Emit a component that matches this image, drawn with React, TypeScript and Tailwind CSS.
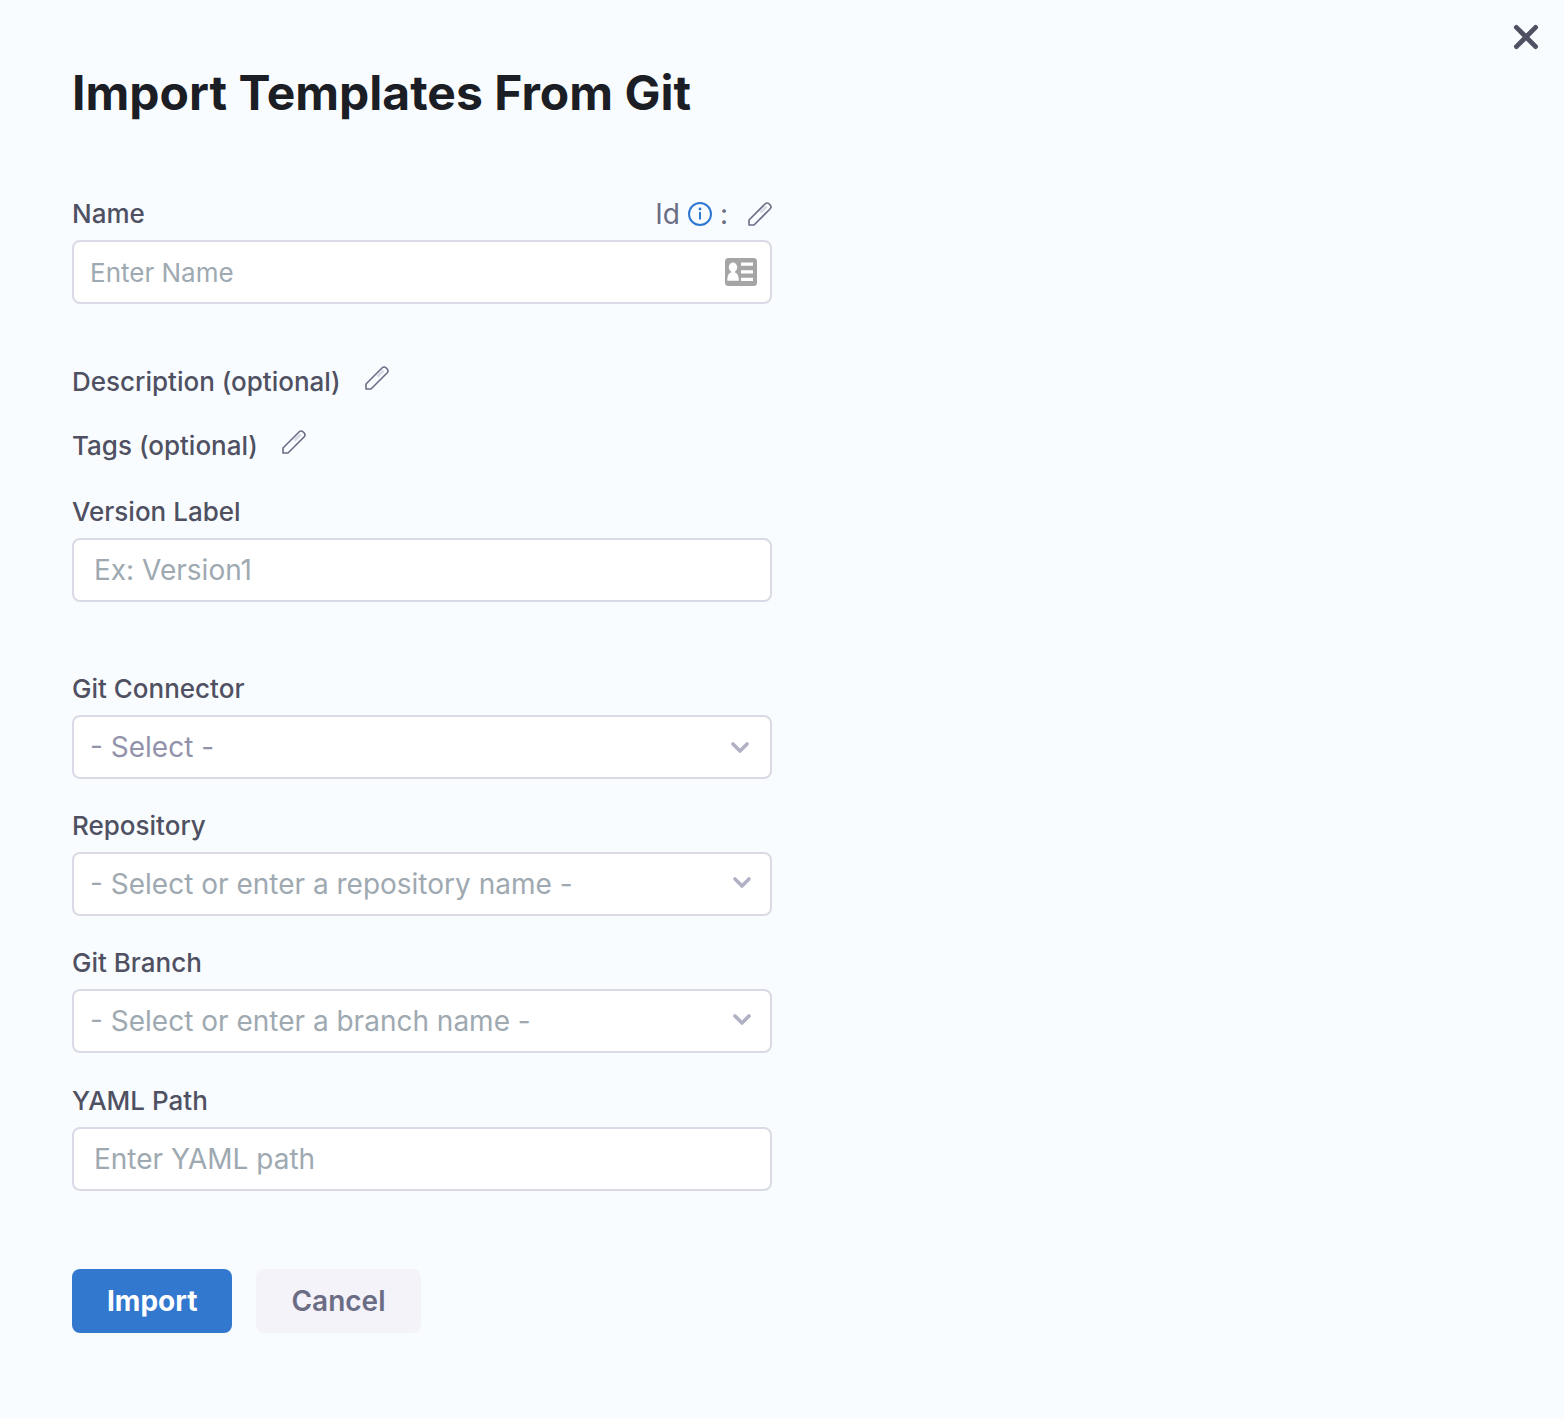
import React from 'react'

function EditButton({ name }: { name: string }) {
  return (
    <button type="button" aria-label={name} className="block">
      <svg width="24" height="24" viewBox="0 0 24 24" fill="none" strokeLinejoin="round" aria-hidden="true">
        <path d="M12.500 10.500l6-6" stroke="#d9dae5" strokeWidth="2.6" />
        <path
          d="M1 23v-5L17 2a3 3 0 0 1 4.200 0l.8.8a3 3 0 0 1 0 4.200L6 23z"
          stroke="#6b6d85"
          strokeWidth="1.6"
        />
      </svg>
    </button>
  )
}

function InfoIcon() {
  return (
    <svg width="24" height="24" viewBox="0 0 24 24" fill="none" stroke="#2f78d2" strokeWidth="2" aria-hidden="true">
      <circle cx="12" cy="12" r="11" />
      <path d="M12 10v7.600" />
      <circle cx="12" cy="7" r="1.4" fill="#2f78d2" stroke="none" />
    </svg>
  )
}

function IdCardIcon() {
  return (
    <svg width="32" height="28" viewBox="0 0 32 28" aria-hidden="true">
      <rect width="32" height="28" rx="3.5" fill="#a5a5a5" />
      <g fill="#fff">
        <ellipse cx="8" cy="9.4" rx="4.2" ry="4.8" />
        <path d="M6 12h4v2.600c2.800.8 3.800 3.800 3.800 8.200H2.400c0-4.400.8-7.400 3.600-8.200z" />
        <path d="M16 4.600h12v3.200H16zM16 12.200h12v3.200H16zM16 19.800h12V23H16z" />
      </g>
    </svg>
  )
}

const box =
  'block h-16 w-full rounded-lg border-2 border-[#d9dae5] bg-white text-[#4f5162] placeholder:text-[#9ea9b1] outline-none'
const label = 'block text-[26px] leading-8 font-medium text-[#4f5162]'

type DropProps = { id: string; text: string; title: string; textColor: string; arrow: string }

function Drop({ id, text, title, textColor, arrow }: DropProps) {
  return (
    <div>
      <label htmlFor={id} className={label}>
        {title}
      </label>
      <div className="relative mt-2.5">
        <select id={id} className={`${box} appearance-none px-4 text-[28px] ${textColor}`}>
          <option>{text}</option>
        </select>
        <svg
          className={`pointer-events-none absolute ${arrow}`}
          width="20"
          height="14"
          viewBox="0 0 20 14"
          fill="none"
          stroke="#b0b1c4"
          strokeWidth="3.6"
          strokeLinecap="round"
          strokeLinejoin="round"
          aria-hidden="true"
        >
          <path d="M3 3l7 7 7-7" />
        </svg>
      </div>
    </div>
  )
}

export default function App() {
  return (
    <div className="min-h-screen bg-[#f9fcff] font-['Inter',sans-serif]">
      <div className="flex justify-end px-6 pt-6">
        <button type="button" aria-label="Close" className="block">
          <svg width="28" height="26" viewBox="0 0 28 26" stroke="#4f5162" strokeWidth="4.8" strokeLinecap="round">
            <path d="M4.400 3.400l19.200 19.200M23.600 3.400L4.400 22.600" />
          </svg>
        </button>
      </div>
      <main className="px-[72px] pt-[14px] pb-20">
        <h1 className="text-[48px] leading-[58px] font-bold text-[#1c1e26]">Import Templates From Git</h1>
        <form className="mt-[76px] max-w-[700px]">
          <div className="flex items-center justify-between">
            <label htmlFor="name" className={label}>
              Name
            </label>
            <div className="flex items-center text-[28px] leading-8 text-[#6b6d85]">
              <span>Id</span>
              <span className="ml-2">
                <InfoIcon />
              </span>
              <span className="mr-5 ml-2">:</span>
              <EditButton name="Edit Id" />
            </div>
          </div>
          <div className="relative mt-2.5">
            <input id="name" placeholder="Enter Name" className={`${box} px-4 text-[26px]`} />
            <span className="pointer-events-none absolute top-[18px] right-[15px]">
              <IdCardIcon />
            </span>
          </div>
          <div className="mt-[62px] flex items-start gap-6">
            <span className={label}>Description (optional)</span>
            <EditButton name="Edit description" />
          </div>
          <div className="mt-8 flex items-start gap-6">
            <span className={label}>Tags (optional)</span>
            <EditButton name="Edit tags" />
          </div>
          <div className="mt-[34px]">
            <label htmlFor="version" className={label}>
              Version Label
            </label>
            <input id="version" placeholder="Ex: Version1" className={`${box} mt-2.5 px-5 text-[28px]`} />
          </div>
          <div className="mt-[71px] grid gap-[31px]">
            <Drop id="connector" title="Git Connector" text="- Select -" textColor="text-[#9293ab]" arrow="top-[26px] right-[22px]" />
            <Drop id="repo" title="Repository" text="- Select or enter a repository name -" textColor="text-[#9ea9b1]" arrow="top-6 right-5" />
            <Drop id="branch" title="Git Branch" text="- Select or enter a branch name -" textColor="text-[#9ea9b1]" arrow="top-6 right-5" />
          </div>
          <div className="mt-8">
            <label htmlFor="yaml" className={label}>
              YAML Path
            </label>
            <input id="yaml" placeholder="Enter YAML path" className={`${box} mt-2.5 px-5 text-[28px]`} />
          </div>
          <div className="mt-[78px] flex gap-6">
            <button type="submit" className="h-16 rounded-lg bg-[#3278cf] px-[35px] text-[28px] font-bold text-white">
              Import
            </button>
            <button type="button" className="h-16 rounded-lg bg-[#f4f3f9] px-[35px] text-[28px] font-semibold text-[#6b6d85]">
              Cancel
            </button>
          </div>
        </form>
      </main>
    </div>
  )
}
